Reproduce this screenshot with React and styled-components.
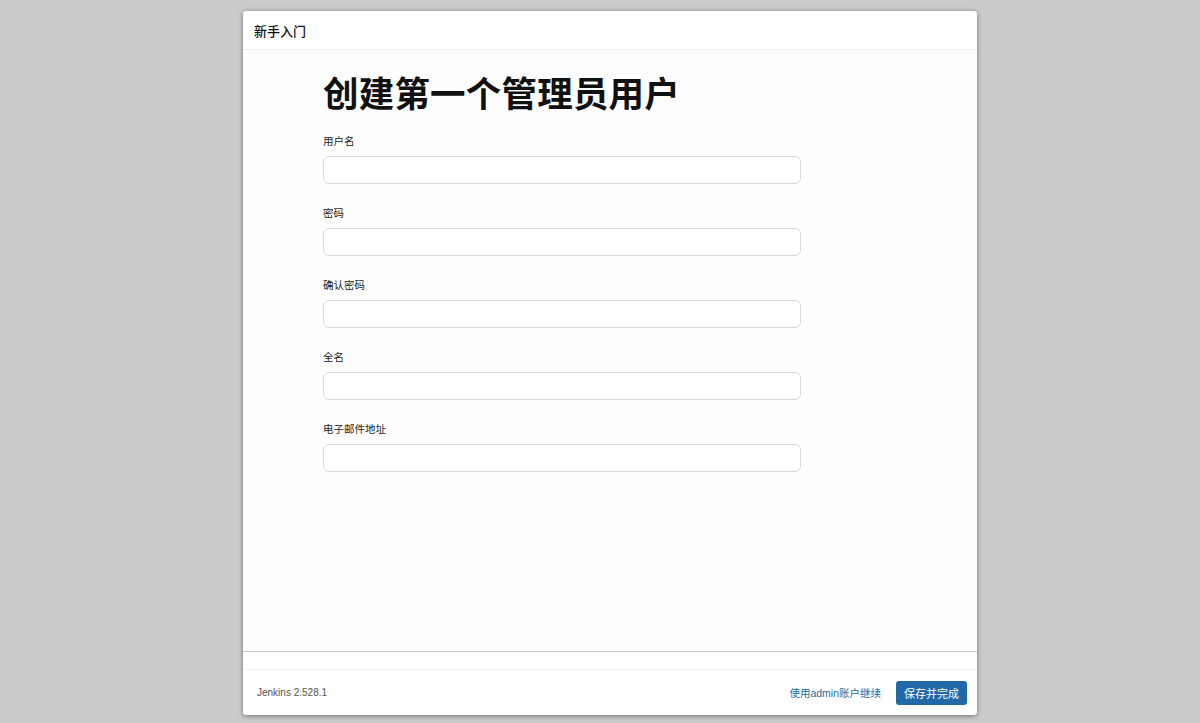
import React from "react";
import styled, { createGlobalStyle } from "styled-components";

const Global = createGlobalStyle`
  html, body { margin: 0; padding: 0; background: #cbcbcb; }
  body { font-family: "Liberation Sans", "Noto Sans CJK SC", sans-serif; }
  * { box-sizing: border-box; }
`;

const Page = styled.div`
  width: 1200px;
  height: 723px;
  padding: 11px 0 0 243px;
`;

const Modal = styled.div`
  width: 734px;
  height: 704px;
  background: #fff;
  border-radius: 3px;
  box-shadow: 0 1px 5px rgba(0, 0, 0, 0.45);
  display: flex;
  flex-direction: column;
`;

const Header = styled.div`
  height: 39px;
  border-bottom: 1px solid #eeeeee;
  display: flex;
  align-items: center;
  padding-left: 11px;
  font-size: 13px;
  font-weight: 500;
  color: #111;
`;

const Body = styled.div`
  flex: 1;
  border-bottom: 1px solid #c8c8c8;
  padding: 20px 0 0 80px;
  background: #fefefe;
`;

const Title = styled.h1`
  margin: 0 0 14px;
  font-size: 35.5px;
  line-height: 50px;
  font-weight: 700;
  color: #111;
  letter-spacing: 0.2px;
`;

const Field = styled.div`
  display: flex;
  flex-direction: column;
  margin-bottom: 22px;
`;

const Label = styled.label`
  font-size: 10.5px;
  line-height: 14px;
  color: #222;
  margin-bottom: 8px;
`;

const Input = styled.input`
  width: 478px;
  height: 28px;
  border: 1.5px solid #d9d9d9;
  border-radius: 6px;
  background: #fff;
  outline: none;
  font-size: 13px;
`;

const Spacer = styled.div`
  height: 18px;
  border-bottom: 1px solid #f2f2f2;
`;

const Footer = styled.div`
  height: 45px;
  display: flex;
  align-items: center;
  padding: 0 10px 0 14px;
`;

const Version = styled.span`
  font-size: 10px;
  color: #555;
  flex: 1;
`;

const Link = styled.a`
  font-size: 10.5px;
  color: #1d6aa0;
  margin-right: 15px;
  cursor: pointer;
`;

const Button = styled.button`
  width: 71px;
  height: 24px;
  border: none;
  border-radius: 3px;
  background: #2069a6;
  color: #fff;
  font-size: 11px;
  font-family: inherit;
  font-weight: 400;
  padding: 0;
`;

const fields = ["用户名", "密码", "确认密码", "全名", "电子邮件地址"];

export default function App() {
  return (
    <>
      <Global />
      <Page>
        <Modal>
          <Header>新手入门</Header>
          <Body>
            <Title>创建第一个管理员用户</Title>
            {fields.map((f) => (
              <Field key={f}>
                <Label>{f}</Label>
                <Input type={f.includes("密码") ? "password" : "text"} />
              </Field>
            ))}
          </Body>
          <Spacer />
          <Footer>
            <Version>Jenkins 2.528.1</Version>
            <Link>使用admin账户继续</Link>
            <Button>保存并完成</Button>
          </Footer>
        </Modal>
      </Page>
    </>
  );
}
